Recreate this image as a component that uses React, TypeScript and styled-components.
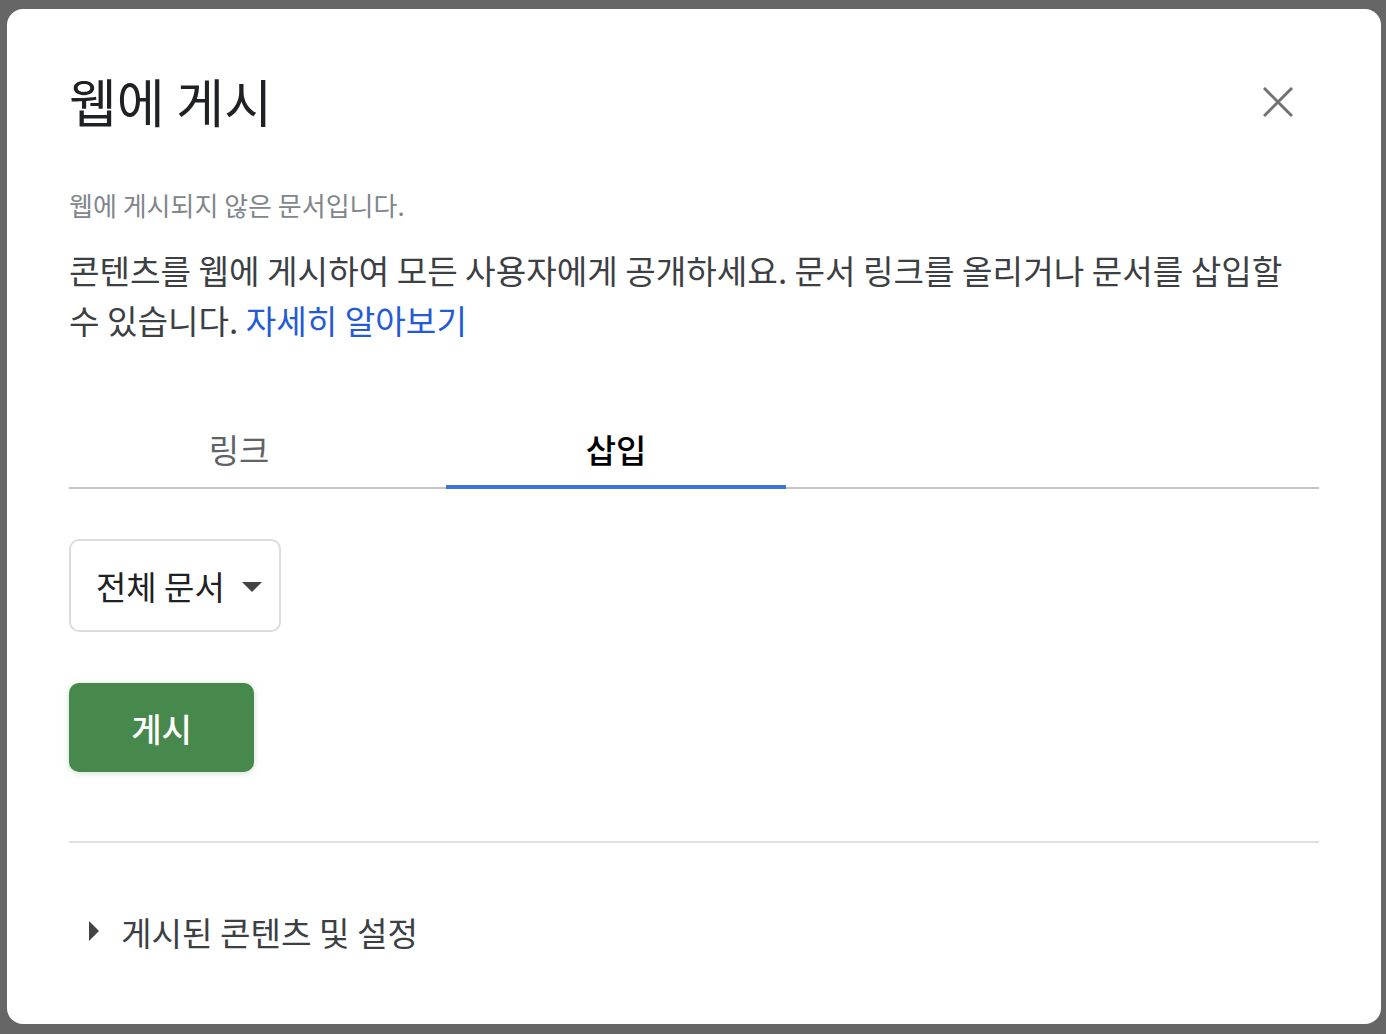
import React, { useState } from "react";
import styled, { createGlobalStyle } from "styled-components";

const GlobalStyle = createGlobalStyle`
  html, body {
    margin: 0;
    padding: 0;
    background: #666666;
  }

  body {
    font-family: "Noto Sans CJK KR", "Noto Sans", sans-serif;
    -webkit-font-smoothing: antialiased;
  }
`;

const Overlay = styled.div`
  width: 1386px;
  height: 1034px;
  padding: 9px 0 0 7px;
  box-sizing: border-box;
  overflow: hidden;
`;

const Dialog = styled.div`
  width: 1374px;
  height: 1015px;
  box-sizing: border-box;
  padding: 62px 62px 0;
  background: #ffffff;
  border-radius: 16px;
  display: flex;
  flex-flow: column nowrap;
`;

const Header = styled.div`
  display: flex;
  flex-flow: row nowrap;
  justify-content: space-between;
  align-items: center;
  height: 60px;
`;

const Title = styled.h1`
  margin: 0;
  font-size: 52px;
  font-weight: 400;
  line-height: 60px;
  color: #202124;
`;

const CloseButton = styled.button`
  display: flex;
  align-items: center;
  justify-content: center;
  width: 40px;
  height: 40px;
  margin-right: 21px;
  margin-top: 2px;
  padding: 0;
  border: none;
  background: transparent;
  cursor: pointer;
`;

const Status = styled.p`
  margin: 59px 0 0;
  font-size: 26px;
  line-height: 30px;
  color: #80868b;
`;

const Description = styled.p`
  margin: 25px 0 0;
  max-width: 1230px;
  font-size: 33.2px;
  line-height: 50px;
  color: #3c4043;

  & > a {
    color: #245bd5;
    text-decoration: none;
  }
`;

const TabList = styled.div`
  display: flex;
  flex-flow: row nowrap;
  gap: 37px;
  margin-top: 68px;
  box-shadow: inset 0 -2px 0 #c4c4c4;
`;

const Tab = styled.button<{ $active: boolean }>`
  width: 340px;
  height: 76px;
  padding: 0;
  border: none;
  border-bottom: 4px solid ${(p) => (p.$active ? "#3b74d8" : "transparent")};
  background: transparent;
  font-family: inherit;
  font-size: 33px;
  font-weight: ${(p) => (p.$active ? 500 : 400)};
  color: ${(p) => (p.$active ? "#000000" : "#5f6368")};
  cursor: pointer;
`;

const Select = styled.button`
  display: flex;
  flex-flow: row nowrap;
  align-items: center;
  justify-content: space-between;
  align-self: flex-start;
  width: 212px;
  height: 93px;
  margin-top: 50px;
  padding: 0 17px 0 25px;
  box-sizing: border-box;
  border: 2px solid #dadce0;
  border-radius: 10px;
  background: #ffffff;
  font-family: inherit;
  font-size: 33px;
  white-space: nowrap;
  color: #202124;
  cursor: pointer;
`;

const Caret = styled.span`
  flex: none;
  width: 0;
  height: 0;
  border-left: 10px solid transparent;
  border-right: 10px solid transparent;
  border-top: 10px solid #444444;
  margin-top: 2px;
`;

const PublishButton = styled.button`
  align-self: flex-start;
  width: 185px;
  height: 89px;
  margin-top: 51px;
  border: none;
  border-radius: 10px;
  background: #47884d;
  box-shadow: 0 1px 6px rgba(60, 120, 70, 0.25);
  font-family: inherit;
  font-size: 33px;
  font-weight: 500;
  color: #ffffff;
  cursor: pointer;
`;

const Divider = styled.hr`
  margin: 69px 0 0;
  height: 2px;
  border: none;
  background: #e0e0e0;
`;

const Disclosure = styled.button`
  display: flex;
  flex-flow: row nowrap;
  align-items: center;
  gap: 22px;
  align-self: flex-start;
  height: 60px;
  margin-top: 58px;
  padding: 0 0 0 20px;
  border: none;
  background: transparent;
  font-family: inherit;
  font-size: 33.2px;
  color: #3c4043;
  cursor: pointer;
`;

const Arrow = styled.span`
  width: 0;
  height: 0;
  border-top: 10px solid transparent;
  border-bottom: 10px solid transparent;
  border-left: 10px solid #444444;
`;

const CloseIcon = () => (
  <svg width="30" height="30" viewBox="0 0 30 30">
    <path
      d="M1 1 L29 29 M29 1 L1 29"
      stroke="#717171"
      strokeWidth="3"
      fill="none"
    />
  </svg>
);

const App: React.FC = () => {
  const [tab, setTab] = useState("embed");

  return (
    <>
      <GlobalStyle />
      <Overlay>
        <Dialog>
          <Header>
            <Title>웹에 게시</Title>
            <CloseButton type="button" aria-label="닫기">
              <CloseIcon />
            </CloseButton>
          </Header>
          <Status>웹에 게시되지 않은 문서입니다.</Status>
          <Description>
            콘텐츠를 웹에 게시하여 모든 사용자에게 공개하세요. 문서 링크를
            올리거나 문서를 삽입할 수 있습니다. <a href="#">자세히 알아보기</a>
          </Description>
          <TabList>
            <Tab
              type="button"
              $active={tab === "link"}
              onClick={() => setTab("link")}
            >
              링크
            </Tab>
            <Tab
              type="button"
              $active={tab === "embed"}
              onClick={() => setTab("embed")}
            >
              삽입
            </Tab>
          </TabList>
          <Select type="button">
            전체 문서
            <Caret />
          </Select>
          <PublishButton type="button">게시</PublishButton>
          <Divider />
          <Disclosure type="button">
            <Arrow />
            게시된 콘텐츠 및 설정
          </Disclosure>
        </Dialog>
      </Overlay>
    </>
  );
};

export default App;
